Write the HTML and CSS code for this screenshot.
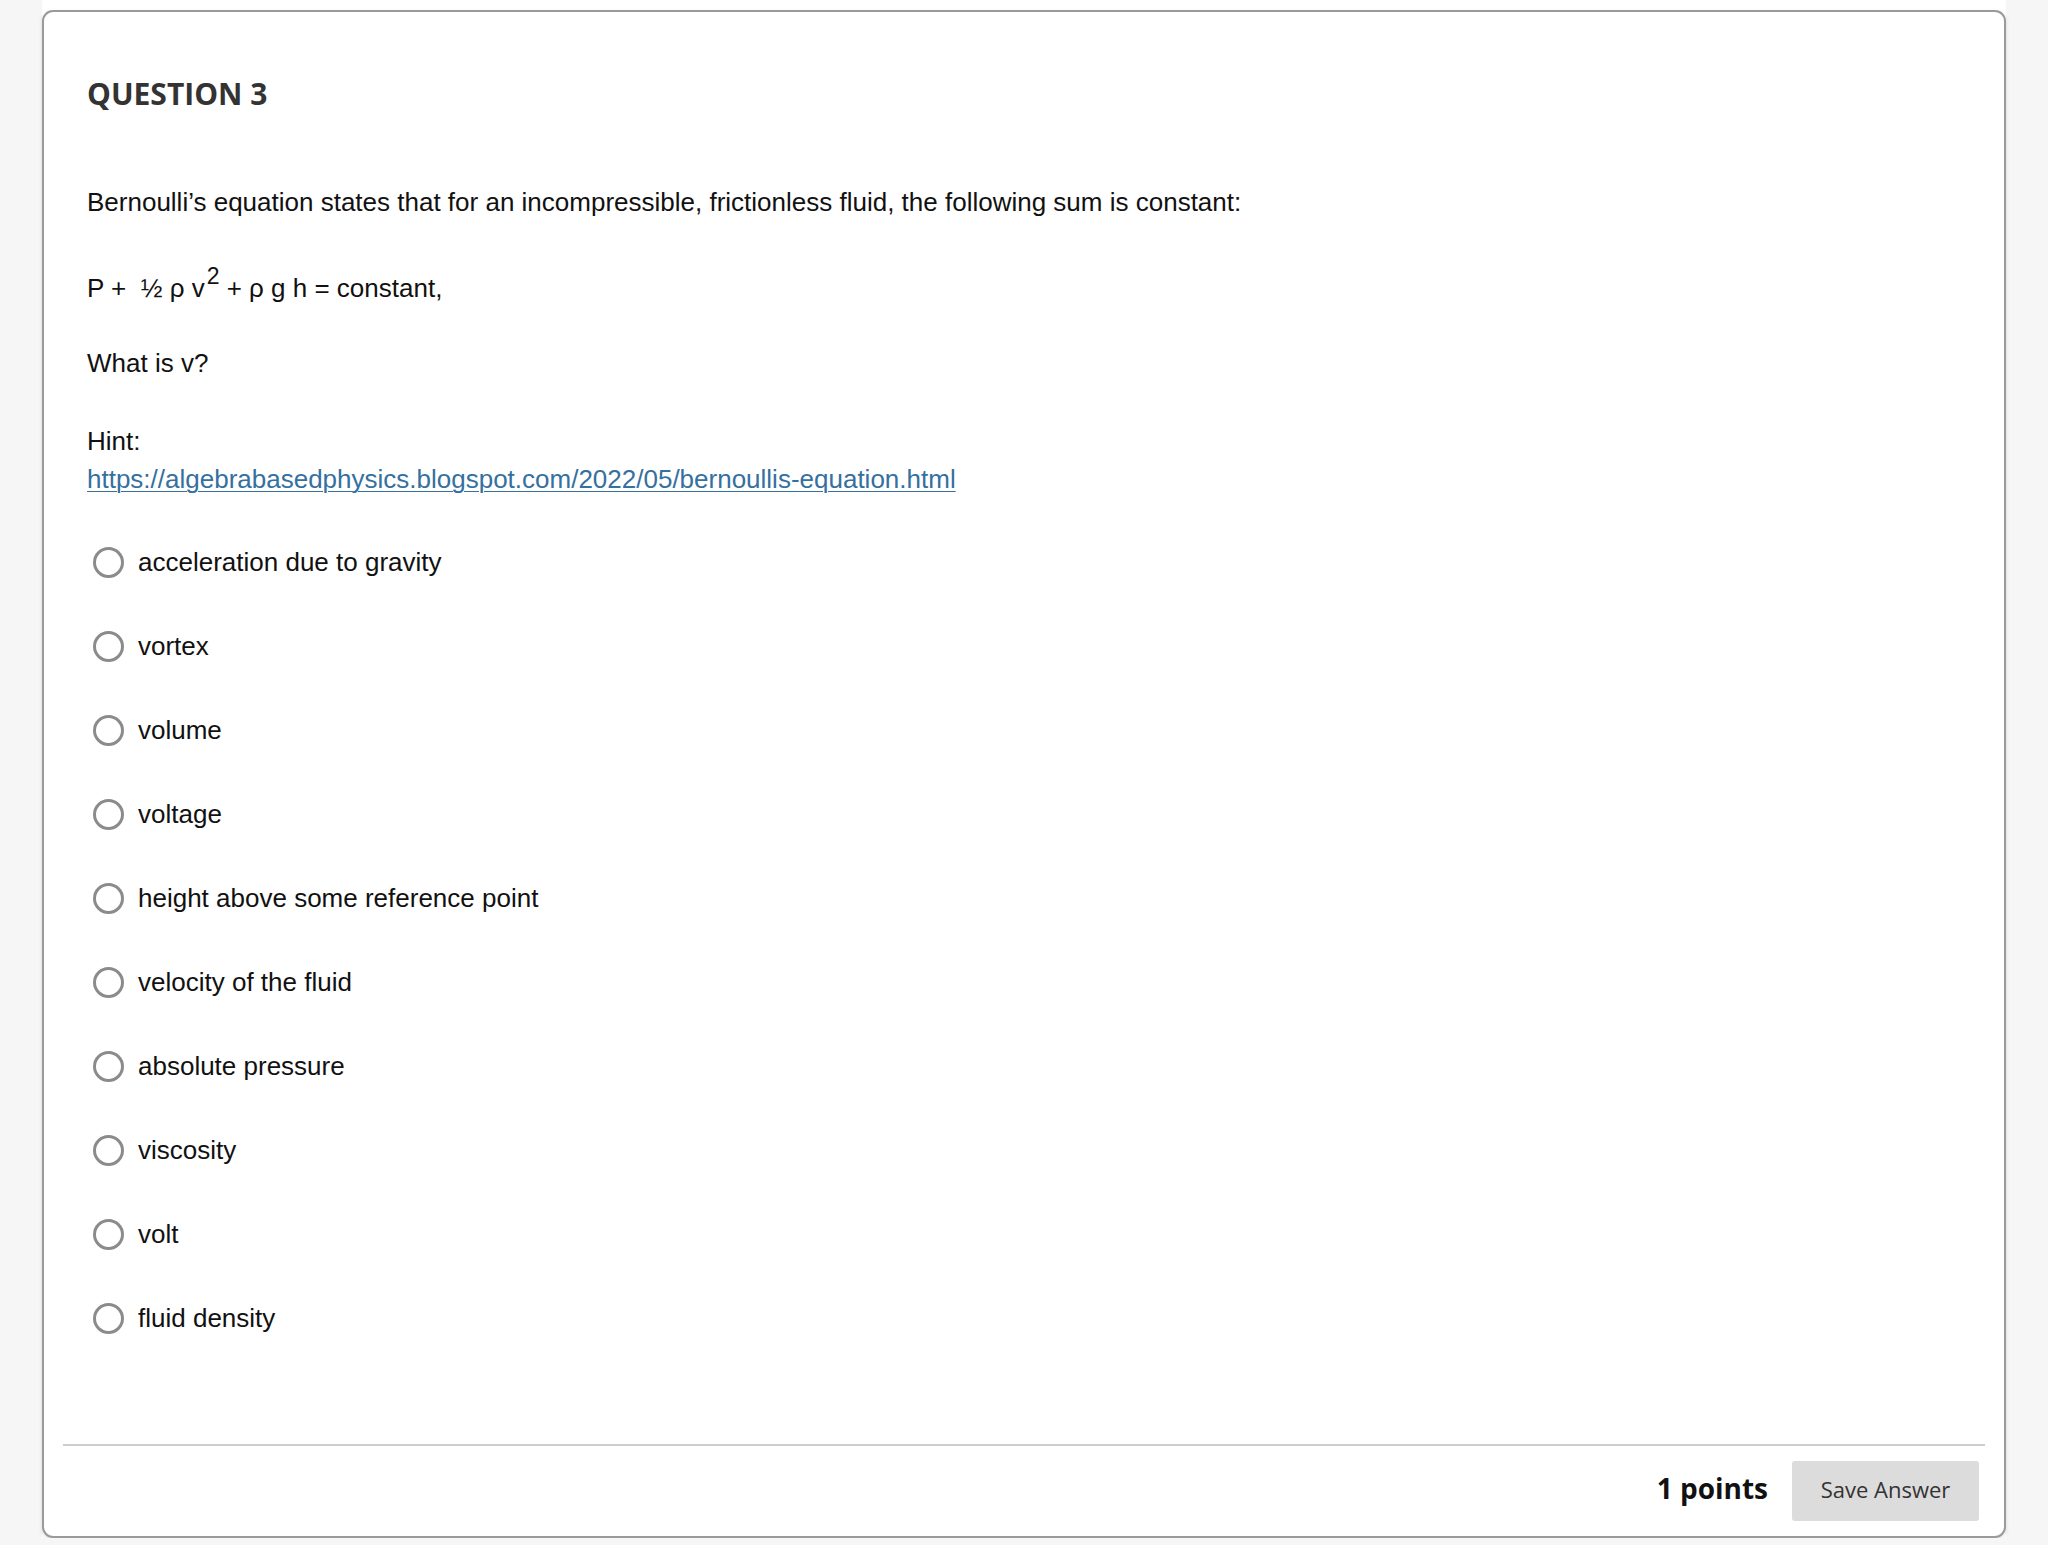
FILE: index.html
```html
<!DOCTYPE html>
<html lang="en">
<head>
<meta charset="utf-8">
<title>Question 3</title>
<link rel="stylesheet" href="styles.css">
</head>
<body>
<div class="page">
  <div class="card">
    <div class="card-body">
      <h2 class="q-title">QUESTION 3</h2>
      <p class="q-text">Bernoulli’s equation states that for an incompressible, frictionless fluid, the following sum is constant:</p>
      <p class="q-text q-eq">P +&nbsp; ½ ρ v<sup class="sup">2</sup> + ρ g h = constant,</p>
      <p class="q-text">What is v?</p>
      <p class="q-text">Hint:<br><a class="hint-link" href="#">https://algebrabasedphysics.blogspot.com/2022/05/bernoullis-equation.html</a></p>
      <ul class="options">
        <li class="option"><span class="radio"></span><span class="opt-label">acceleration due to gravity</span></li>
        <li class="option"><span class="radio"></span><span class="opt-label">vortex</span></li>
        <li class="option"><span class="radio"></span><span class="opt-label">volume</span></li>
        <li class="option"><span class="radio"></span><span class="opt-label">voltage</span></li>
        <li class="option"><span class="radio"></span><span class="opt-label">height above some reference point</span></li>
        <li class="option"><span class="radio"></span><span class="opt-label">velocity of the fluid</span></li>
        <li class="option"><span class="radio"></span><span class="opt-label">absolute pressure</span></li>
        <li class="option"><span class="radio"></span><span class="opt-label">viscosity</span></li>
        <li class="option"><span class="radio"></span><span class="opt-label">volt</span></li>
        <li class="option"><span class="radio"></span><span class="opt-label">fluid density</span></li>
      </ul>
    </div>
    <div class="card-footer">
      <span class="points">1 points</span>
      <button class="save-btn" type="button">Save Answer</button>
    </div>
  </div>
</div>
</body>
</html>
```

FILE: styles.css
```css
html, body {
  margin: 0;
  padding: 0;
}
body {
  background: #f6f6f6;
  font-family: "Liberation Sans", Arial, sans-serif;
  color: #111;
}
.page {
  margin-left: 42px;
  width: 1964px;
  background: #ffffff;
  padding-top: 10px;
}
.card {
  box-sizing: border-box;
  width: 1964px;
  height: 1528px;
  border: 2px solid #9a9a9a;
  border-radius: 11px;
  background: #ffffff;
  box-shadow: 0 2px 4px rgba(0, 0, 0, 0.12);
  display: flex;
  flex-direction: column;
}
.card-body {
  flex: 1;
  padding: 62px 43px 0 43px;
}
.q-title {
  margin: 0 0 69px 0;
  font-family: "Open Sans", sans-serif;
  font-weight: 700;
  font-size: 30px;
  line-height: 40px;
  color: #333;
}
.q-text {
  margin: 0 0 40px 0;
  font-size: 26px;
  line-height: 38px;
  color: #111;
}
.q-eq {
  margin-bottom: 37px;
}
.sup {
  font-size: 23px;
  line-height: 31px;
  vertical-align: 13px;
  margin-left: 2px;
}
.hint-link {
  color: #35709f;
  text-decoration: underline;
  text-underline-offset: 3px;
  text-decoration-thickness: 1px;
}
.options {
  list-style: none;
  margin: 45px 0 0 0;
  padding: 0 0 0 6px;
  display: flex;
  flex-direction: column;
  gap: 46px;
}
.option {
  display: flex;
  align-items: center;
  gap: 14px;
  height: 38px;
}
.radio {
  box-sizing: border-box;
  width: 31px;
  height: 31px;
  border: 3px solid #8b8b8b;
  border-radius: 50%;
  background: #fff;
  flex: none;
}
.opt-label {
  font-size: 26px;
  line-height: 38px;
  color: #111;
}
.card-footer {
  margin: 0 19px;
  border-top: 2px solid #cdcdcd;
  padding: 15px 6px 15px 0;
  display: flex;
  justify-content: flex-end;
  align-items: center;
  gap: 24px;
}
.points {
  font-family: "Open Sans", sans-serif;
  font-weight: 700;
  font-size: 28px;
  color: #111;
  position: relative;
  top: -3px;
}
.save-btn {
  box-sizing: border-box;
  width: 187px;
  height: 60px;
  border: none;
  border-radius: 3px;
  background: #dcdcdc;
  font-family: "Open Sans", sans-serif;
  font-size: 22px;
  color: #333;
  padding: 0 0 5px 0;
}
```
